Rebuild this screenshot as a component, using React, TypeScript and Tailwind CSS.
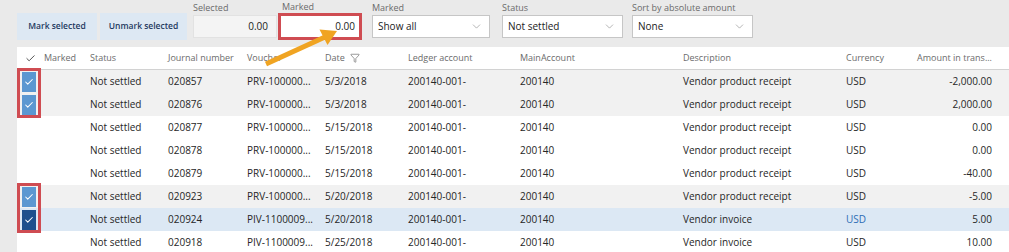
import { Check, ChevronDown, Filter } from "lucide-react";

type Row = {
  journal: string;
  voucher: string;
  date: string;
  description: string;
  amount: string;
  state: "none" | "marked" | "selected";
};

const rows: Row[] = [
  { journal: "020857", voucher: "PRV-100000...", date: "5/3/2018", description: "Vendor product receipt", amount: "-2,000.00", state: "marked" },
  { journal: "020876", voucher: "PRV-100000...", date: "5/3/2018", description: "Vendor product receipt", amount: "2,000.00", state: "marked" },
  { journal: "020877", voucher: "PRV-100000...", date: "5/15/2018", description: "Vendor product receipt", amount: "0.00", state: "none" },
  { journal: "020878", voucher: "PRV-100000...", date: "5/15/2018", description: "Vendor product receipt", amount: "0.00", state: "none" },
  { journal: "020879", voucher: "PRV-100000...", date: "5/15/2018", description: "Vendor product receipt", amount: "-40.00", state: "none" },
  { journal: "020923", voucher: "PRV-100000...", date: "5/20/2018", description: "Vendor product receipt", amount: "-5.00", state: "marked" },
  { journal: "020924", voucher: "PIV-1100009...", date: "5/20/2018", description: "Vendor invoice", amount: "5.00", state: "selected" },
  { journal: "020918", voucher: "PIV-1100009...", date: "5/25/2018", description: "Vendor invoice", amount: "10.00", state: "none" },
];

const cols =
  "grid grid-cols-[27px_46px_78px_79px_78px_83px_112px_163px_163px_60px_1fr] items-center";

function Dropdown({ label, value, className }: { label: string; value: string; className: string }) {
  return (
    <div className={`flex flex-col ${className}`}>
      <span className="h-[15px] pt-[2px] text-[9px] leading-[11px] text-[#6b6b6b]">{label}</span>
      <div className="flex h-[23px] items-center justify-between border border-[#c6c6c6] bg-white pl-[5px] pr-[6px]">
        <span className="text-[10px] text-[#222]">{value}</span>
        <ChevronDown size={13} strokeWidth={1} className="text-[#777]" />
      </div>
    </div>
  );
}

export default function App() {
  return (
    <div className="relative h-[252px] w-[1009px] overflow-hidden bg-[#eaeaea] font-['Open_Sans',sans-serif]">
      {/* Toolbar */}
      <div className="flex h-[45px] pl-[17px]">
        <button className="mt-[13px] h-[27px] w-[80px] bg-[#dde8f3] text-[8.5px] font-semibold text-[#1f3a5f]">
          Mark selected
        </button>
        <button className="ml-[3px] mt-[13px] h-[27px] w-[87px] bg-[#dde8f3] text-[8.5px] font-semibold text-[#1f3a5f]">
          Unmark selected
        </button>

        {/* Selected */}
        <div className="ml-[6px] flex w-[84px] flex-col">
          <span className="h-[15px] pt-[2px] text-[9px] leading-[11px] text-[#6b6b6b]">Selected</span>
          <div className="flex h-[23px] items-center justify-end border border-[#e2e2e2] bg-[#f4f4f4] pr-[8px] text-[10px] text-[#222]">
            0.00
          </div>
        </div>

        {/* Marked (highlighted) */}
        <div className="ml-[1px] flex w-[84px] flex-col">
          <span className="h-[13px] pl-[4px] pt-[1px] text-[9px] leading-[11px] text-[#6b6b6b]">Marked</span>
          <div className="flex h-[27px] items-center justify-end border-[3px] border-[#cf4c52] bg-white pr-[4px] text-[10px] text-[#222]">
            0.00
          </div>
        </div>

        <Dropdown label="Marked" value="Show all" className="ml-[10px] w-[118px]" />
        <Dropdown label="Status" value="Not settled" className="ml-[12px] w-[121px]" />
        <Dropdown label="Sort by absolute amount" value="None" className="ml-[9px] w-[121px]" />
      </div>

      {/* Grid */}
      <div className="ml-[17px] mt-[2px] bg-white">
        <div className={`${cols} h-[23px] border-b border-[#d2d2d2] text-[9px] text-[#6b6b6b]`}>
          <div className="pl-[8px]">
            <Check size={11} strokeWidth={2} className="text-[#444]" />
          </div>
          <span>Marked</span>
          <span>Status</span>
          <span>Journal number</span>
          <span>Voucher</span>
          <span className="flex items-center gap-[5px]">
            Date
            <Filter size={10} strokeWidth={1.4} className="text-[#555]" />
          </span>
          <span>Ledger account</span>
          <span>MainAccount</span>
          <span>Description</span>
          <span>Currency</span>
          <span className="pr-[17px] text-right">Amount in trans...</span>
        </div>

        {rows.map((r) => (
          <div
            key={r.journal}
            className={`${cols} h-[23px] text-[10px] text-[#262626] ${
              r.state === "marked" ? "bg-[#f1f1f1]" : r.state === "selected" ? "bg-[#dce8f4]" : "bg-white"
            }`}
          >
            <div className="pl-[5px]">
              {r.state !== "none" && (
                <div
                  className={`flex h-[20px] w-[14px] items-center justify-center ${
                    r.state === "selected" ? "bg-[#1d4f8d]" : "bg-[#5b97d1]"
                  }`}
                >
                  <Check size={10} strokeWidth={2.5} className="text-white" />
                </div>
              )}
            </div>
            <span />
            <span>Not settled</span>
            <span>{r.journal}</span>
            <span>{r.voucher}</span>
            <span>{r.date}</span>
            <span>200140-001-</span>
            <span>200140</span>
            <span>{r.description}</span>
            <span className={r.state === "selected" ? "text-[#2d6db5]" : ""}>USD</span>
            <span className="pr-[17px] text-right">{r.amount}</span>
          </div>
        ))}
      </div>

      {/* Annotations */}
      <div className="absolute left-[17px] top-[68px] h-[50px] w-[24px] border-[3px] border-[#cf4c52]" />
      <div className="absolute left-[17px] top-[183px] h-[50px] w-[24px] border-[3px] border-[#cf4c52]" />
      <svg className="absolute left-[255px] top-[20px]" width="95" height="55" viewBox="0 0 95 55">
        <line x1="11" y1="44" x2="70" y2="17" stroke="#f0a422" strokeWidth="5" />
        <polygon points="82,11 72.5,25 64.5,9.5" fill="#f0a422" />
      </svg>
    </div>
  );
}
